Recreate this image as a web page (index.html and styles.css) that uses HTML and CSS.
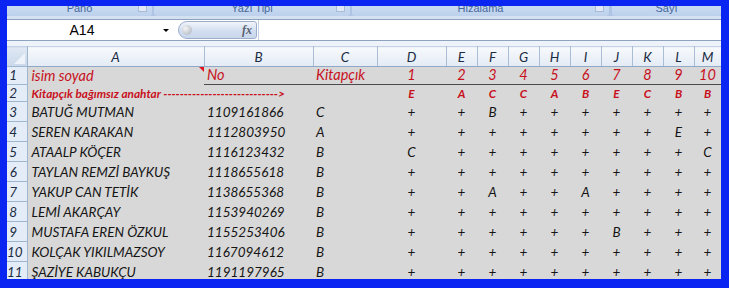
FILE: index.html
```html
<!DOCTYPE html>
<html>
  <head>
    <meta charset="utf-8">
    <title>Kitapçık</title>
    <link rel="stylesheet" href="styles.css">
  </head>
  <body>
    <div class="window">
      <div class="ribbon">
        <div class="group g-pano"><span>Pano</span><i class="launcher"></i></div>
        <div class="group g-font"><span>Yazı Tipi</span><i class="launcher"></i></div>
        <div class="group g-align"><span>Hizalama</span><i class="launcher"></i></div>
        <div class="group g-num"><span>Sayı</span></div>
      </div>
      <div class="ribbon-foot"></div>
      <div class="formula-bar">
        <div class="namebox"><span class="ref">A14</span><span class="drop"></span></div>
        <div class="fx-area">
          <div class="fx-pill"><span class="knob"></span><span class="fx">fx</span></div>
        </div>
        <div class="formula-input"></div>
      </div>
      <div class="sheet-gap"></div>
      <table class="sheet">
        <colgroup>
          <col class="c-rh"><col class="c-a"><col class="c-b"><col class="c-c"><col class="c-d">
          <col class="c-n"><col class="c-n"><col class="c-n"><col class="c-n"><col class="c-n"><col class="c-n"><col class="c-n"><col class="c-n">
          <col class="c-m">
        </colgroup>
        <tr class="head">
          <th class="corner"><span></span></th>
          <th>A</th><th>B</th><th>C</th><th>D</th><th>E</th><th>F</th><th>G</th><th>H</th><th>I</th><th>J</th><th>K</th><th>L</th><th>M</th>
        </tr>
        <tr class="r-title">
          <th>1</th>
          <td class="name">isim soyad<span class="note"></span></td><td class="num">No</td><td class="bk">Kitapçık</td>
          <td>1</td><td>2</td><td>3</td><td>4</td><td>5</td><td>6</td><td>7</td><td>8</td><td>9</td><td>10</td>
        </tr>
        <tr class="r-key">
          <th>2</th>
          <td class="name key-label">Kitapçık bağımsız anahtar ----------------------------&gt;</td><td class="num"></td><td class="bk"></td>
          <td>E</td><td>A</td><td>C</td><td>C</td><td>A</td><td>B</td><td>E</td><td>C</td><td>B</td><td>B</td>
        </tr>
        <tr>
          <th>3</th>
          <td class="name">BATUĞ MUTMAN</td><td class="num">1109161866</td><td class="bk">C</td>
          <td>+</td><td>+</td><td>B</td><td>+</td><td>+</td><td>+</td><td>+</td><td>+</td><td>+</td><td>+</td>
        </tr>
        <tr>
          <th>4</th>
          <td class="name">SEREN KARAKAN</td><td class="num">1112803950</td><td class="bk">A</td>
          <td>+</td><td>+</td><td>+</td><td>+</td><td>+</td><td>+</td><td>+</td><td>+</td><td>E</td><td>+</td>
        </tr>
        <tr>
          <th>5</th>
          <td class="name">ATAALP KÖÇER</td><td class="num">1116123432</td><td class="bk">B</td>
          <td>C</td><td>+</td><td>+</td><td>+</td><td>+</td><td>+</td><td>+</td><td>+</td><td>+</td><td>C</td>
        </tr>
        <tr>
          <th>6</th>
          <td class="name">TAYLAN REMZİ BAYKUŞ</td><td class="num">1118655618</td><td class="bk">B</td>
          <td>+</td><td>+</td><td>+</td><td>+</td><td>+</td><td>+</td><td>+</td><td>+</td><td>+</td><td>+</td>
        </tr>
        <tr>
          <th>7</th>
          <td class="name">YAKUP CAN TETİK</td><td class="num">1138655368</td><td class="bk">B</td>
          <td>+</td><td>+</td><td>A</td><td>+</td><td>+</td><td>A</td><td>+</td><td>+</td><td>+</td><td>+</td>
        </tr>
        <tr>
          <th>8</th>
          <td class="name">LEMİ AKARÇAY</td><td class="num">1153940269</td><td class="bk">B</td>
          <td>+</td><td>+</td><td>+</td><td>+</td><td>+</td><td>+</td><td>+</td><td>+</td><td>+</td><td>+</td>
        </tr>
        <tr>
          <th>9</th>
          <td class="name">MUSTAFA EREN ÖZKUL</td><td class="num">1155253406</td><td class="bk">B</td>
          <td>+</td><td>+</td><td>+</td><td>+</td><td>+</td><td>+</td><td>B</td><td>+</td><td>+</td><td>+</td>
        </tr>
        <tr>
          <th>10</th>
          <td class="name">KOLÇAK YIKILMAZSOY</td><td class="num">1167094612</td><td class="bk">B</td>
          <td>+</td><td>+</td><td>+</td><td>+</td><td>+</td><td>+</td><td>+</td><td>+</td><td>+</td><td>+</td>
        </tr>
        <tr>
          <th>11</th>
          <td class="name">ŞAZİYE KABUKÇU</td><td class="num">1191197965</td><td class="bk">B</td>
          <td>+</td><td>+</td><td>+</td><td>+</td><td>+</td><td>+</td><td>+</td><td>+</td><td>+</td><td>+</td>
        </tr>
      </table>
    </div>
  </body>
</html>
```

FILE: styles.css
```css
body {
  margin: 0;
  width: 729px;
  height: 288px;
  overflow: hidden;
  background-color: #0a24f2;
  font-family: Lato, "Liberation Sans", sans-serif;
}
.window {
  margin: 6px 8px 0 7px;
  height: 273px;
  overflow: hidden;
  background-color: #eef3fa;
}

/* ribbon group captions, only their lower half shows */
.ribbon {
  display: flex;
  height: 10px;
  background-color: #aec4e2;
}
.group {
  position: relative;
  height: 10px;
  overflow: hidden;
  background: linear-gradient(#c9dbf2, #bdd1ec);
  border-radius: 0 0 3px 3px;
  text-align: center;
}
.group span {
  display: block;
  margin-top: -4px;
  font-family: "Liberation Sans", sans-serif;
  font-size: 11px;
  line-height: 13px;
  color: #47679a;
}
.g-pano { width: 145px; margin-right: 2px; }
.g-font { width: 196px; margin-right: 2px; }
.g-align { width: 257px; margin-right: 3px; }
.g-num { width: 109px; }
.launcher {
  position: absolute;
  right: 5px;
  top: 0;
  width: 7px;
  height: 5px;
  border: 1px solid #a9bcd6;
  border-top: none;
  background-color: #dfe8f4;
}
.ribbon-foot {
  height: 3px;
  background-color: #d4e1f1;
  border-bottom: 1px solid #8ea3c0;
}

/* formula bar */
.formula-bar {
  display: flex;
  height: 20px;
  background-color: #fff;
  border-bottom: 1px solid #8ea3c0;
}
.namebox {
  position: relative;
  width: 165px;
}
.namebox .ref {
  display: block;
  width: 150px;
  text-align: center;
  font-family: "Liberation Sans", sans-serif;
  font-size: 14px;
  line-height: 20px;
  color: #000;
}
.namebox .drop {
  position: absolute;
  right: 3px;
  top: 9px;
  border-left: 3px solid transparent;
  border-right: 3px solid transparent;
  border-top: 3px solid #000;
}
.fx-area {
  width: 86px;
  padding: 1px 0 0 6px;
  box-sizing: border-box;
}
.fx-pill {
  display: flex;
  align-items: center;
  justify-content: space-between;
  width: 79px;
  height: 18px;
  box-sizing: border-box;
  padding: 0 4px 0 3px;
  border: 1px solid #9aaecb;
  border-radius: 9px 3px 3px 9px;
  background: linear-gradient(#f1f5fb, #d3def0 55%, #c9d7ec);
}
.knob {
  width: 10px;
  height: 10px;
  border-radius: 50%;
  background: radial-gradient(circle at 35% 35%, #f4f4f4, #a9b0bb);
}
.fx {
  font-family: "Liberation Serif", serif;
  font-style: italic;
  font-weight: bold;
  font-size: 12px;
  color: #5b6270;
}
.formula-input {
  flex: 1;
  border-left: 1px solid #c3d0e2;
}
.sheet-gap {
  height: 5px;
  background-color: #eef3fa;
}

/* worksheet */
.sheet {
  width: 714px;
  table-layout: fixed;
  border-collapse: collapse;
  border-spacing: 0;
  font-style: italic;
  font-size: 13.5px;
  line-height: 16px;
}
.c-rh { width: 20px; }
.c-a { width: 177px; }
.c-b { width: 109px; }
.c-c { width: 64px; }
.c-d { width: 69px; }
.c-n { width: 31px; }
.c-m { width: 27px; }
.sheet th {
  padding: 0;
  font-weight: normal;
  color: #1b2c44;
  overflow: visible;
  white-space: nowrap;
}
.head th {
  height: 18px;
  background: linear-gradient(#f7f9fc, #e4ebf5);
  border-top: 1px solid #c6d3e4;
  border-right: 1px solid #a9bdd5;
  border-bottom: 1px solid #8fa8c6;
  text-align: center;
}
.head .corner {
  position: relative;
  background: linear-gradient(#dfe8f4, #c9d8ea);
}
.corner span {
  position: absolute;
  right: 2px;
  bottom: 2px;
  border-left: 11px solid transparent;
  border-bottom: 11px solid #eef3fa;
}
tr th:first-child {
  background-color: #e4ecf7;
  border-right: 1px solid #9eb6ce;
  border-bottom: 1px solid #9eb6ce;
  text-align: center;
  padding-right: 7px;
  vertical-align: bottom;
  padding-bottom: 1px;
}
.sheet td {
  height: 18px;
  padding: 0 0 2px;
  background-color: #d8d8d8;
  color: #151515;
  text-align: center;
  vertical-align: bottom;
  white-space: nowrap;
  overflow: visible;
}
.sheet td.name {
  position: relative;
  text-align: left;
  padding-left: 4px;
}
.sheet td.num {
  text-align: left;
  padding-left: 3px;
}
.sheet td.bk {
  text-align: left;
  padding-left: 3px;
}
.sheet .r-title td {
  height: 16px;
  padding-bottom: 1px;
  color: #c8101c;
  font-size: 14.5px;
}
.r-title td:not(.name) {
  border-bottom: 1px solid #4a4a4a;
}
.sheet .r-key th,
.sheet .r-key td {
  height: 15px;
  padding-bottom: 1px;
  line-height: 14px;
}
.r-key td {
  color: #c8101c;
  font-weight: bold;
  font-size: 11.8px;
}
.note {
  position: absolute;
  top: 0;
  right: 0;
  border-left: 5px solid transparent;
  border-top: 5px solid #e0141c;
}
```
